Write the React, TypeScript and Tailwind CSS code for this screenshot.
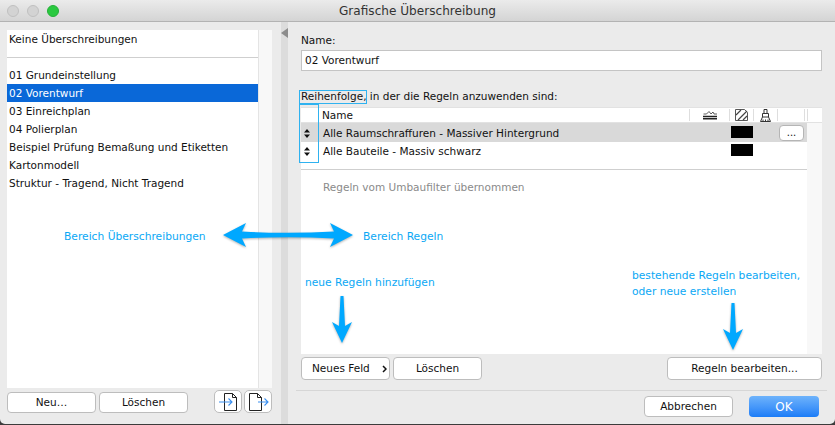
const rows = ["01 Grundeinstellung", "02 Vorentwurf", "03 Einreichplan", "04 Polierplan", "Beispiel Prüfung Bemaßung und Etiketten", "Kartonmodell", "Struktur - Tragend, Nicht Tragend"];

function Btn({ className = "", children }: { className?: string; children: React.ReactNode }) {
  return (
    <button className={"flex items-center justify-center bg-white border border-[#bdbdbd] rounded-[4px] text-[#111] " + className}>
      {children}
    </button>
  );
}

function FileArrow({ flip }: { flip?: boolean }) {
  const x = flip ? 4.5 : 9.5;
  return (
    <svg width="26" height="21" viewBox="0 0 26 21" fill="none">
      <path d={`M${x} 2.500h8l4 4v13h-12z M${x + 8} 2.500v4h4`} stroke="#222" strokeWidth="1" />
      <path d={flip ? "M13 11h10M19.500 7.500l3.500 3.500-3.500 3.500" : "M4 11h13M13.500 7.500l3.500 3.500-3.500 3.500"} stroke="#3a8ff0" strokeWidth="1.100" />
    </svg>
  );
}

function UpDown() {
  return (
    <svg className="ml-[3px] mr-[13px] shrink-0" width="6" height="9" viewBox="0 0 6 9">
      <path d="M3 0l3 3.500H0zM3 9 0 5.500h6z" fill="#111" />
    </svg>
  );
}

function DownArrow({ className }: { className: string }) {
  return (
    <svg className={"absolute drop-shadow-[0_1px_1px_rgba(0,0,0,0.3)] " + className} width="20" height="48" viewBox="0 0 20 48">
      <path d="M8.500 0h3L13 30l7-4-10 21L0 26l7 4z" fill="#00a8ff" />
    </svg>
  );
}

function Sep() {
  return <span className="w-px h-[12px] bg-[#dedede] shrink-0" />;
}

export default function App() {
  return (
    <div className="relative w-[835px] h-[425px] overflow-hidden bg-[#3c3c3c] text-[10.5px] text-[#111]" style={{ fontFamily: '"DejaVu Sans", sans-serif' }}>
      <div className="h-[424px] bg-[#ebebeb] rounded-b-[5px] flex flex-col">
        <div className="relative h-[22px] shrink-0 pt-[1px] bg-gradient-to-b from-[#ebebeb] to-[#d4d4d4] border-b border-[#b3b3b3] flex items-center justify-center text-[12.1px] text-[#333]">
          <div className="absolute left-[7px] top-[5px] flex gap-[8px]">
            <span className="w-[12px] h-[12px] rounded-full bg-[#d3d3d3] border border-[#c0c0c0]" />
            <span className="w-[12px] h-[12px] rounded-full bg-[#d3d3d3] border border-[#c0c0c0]" />
            <span className="w-[12px] h-[12px] rounded-full bg-[#2ac940] border border-[#25b038]" />
          </div>
          Grafische Überschreibung
        </div>

        <div className="flex flex-1 min-h-0">
          {/* left panel */}
          <div className="w-[281px] shrink-0 pl-[7px] pt-[8px] flex flex-col">
            <div className="flex h-[358px] w-[265px]">
              <div className="w-[252px] bg-white border-r border-[#e4e4e4]">
                <div className="h-[18px] pl-[2px] pt-[1px] flex items-center">Keine Überschreibungen</div>
                <div className="h-[10px] border-b border-[#cfcfcf] mb-[8px]" />
                {rows.map((r) => (
                  <div key={r} className={"h-[18px] pl-[2px] pt-[1px] flex items-center " + (r === "02 Vorentwurf" ? "bg-[#0a68d8] text-white" : "")}>
                    {r}
                  </div>
                ))}
              </div>
              <div className="w-[13px] bg-[#f8f8f8]" />
            </div>
            <div className="flex items-start h-[24px] mt-[2px]">
              <Btn className="w-[89px] h-[21px] mt-[2px]">Neu…</Btn>
              <Btn className="w-[89px] h-[21px] mt-[2px] ml-[3px]">Löschen</Btn>
              <Btn className="w-[28px] h-[23px] ml-[26px] rounded-[5px]"><FileArrow /></Btn>
              <Btn className="w-[28px] h-[23px] ml-[2px] rounded-[5px]"><FileArrow flip /></Btn>
            </div>
          </div>

          {/* splitter */}
          <div className="w-[7px] shrink-0 bg-[#dcdcdc] relative">
            <span className="absolute left-0 top-[6px] w-0 h-0 border-y-[5px] border-y-transparent border-r-[7px] border-r-[#8c8c8c]" />
          </div>

          {/* right panel */}
          <div className="flex-1 pl-[13px] pr-[13px] pt-[10px] flex flex-col">
            <div className="h-[16px] pt-[1px] flex items-center">Name:</div>
            <div className="h-[21px] mt-[2px] bg-white border border-[#c4c4c4] flex items-center pl-[3px]">02 Vorentwurf</div>
            <div className="h-[15px] mt-[18px] pt-[1px] flex items-center">Reihenfolge, in der die Regeln anzuwenden sind:</div>

            <div className="mt-[3px] h-[247px] bg-white flex flex-col">
              <div className="h-[16px] shrink-0 border-y border-[#e2e2e2] flex items-center">
                <span className="w-[21px] shrink-0" />
                <span className="flex-1 pt-[1px]">Name</span>
                <Sep />
                <div className="w-[39px] flex justify-center">
                  <svg width="14" height="10" viewBox="0 0 14 10" fill="none">
                    <path d="M0.500 4h3L6 1.500 8 4l2-2 1 2h3" stroke="#333" strokeWidth="0.800" />
                    <path d="M0 6.500h14M0 8.800h14" stroke="#222" strokeWidth="1.400" />
                  </svg>
                </div>
                <Sep />
                <div className="w-[23px] flex justify-center">
                  <svg width="13" height="12" viewBox="0 0 13 12" fill="none">
                    <path d="M0.500 0.500h9l3 3v8h-12z" stroke="#444" strokeWidth="0.900" />
                    <path d="M1 6 6 1M3 11l9-9M8 11l4-4" stroke="#444" strokeWidth="1.200" />
                  </svg>
                </div>
                <Sep />
                <div className="w-[23px] flex justify-center">
                  <svg width="11" height="13" viewBox="0 0 11 13" fill="none">
                    <path d="M4 0.500h3v4H4zM2.500 4.500h6v3.500h-6zM2.500 8 0.500 12.500h10L8.500 8" stroke="#333" />
                    <path d="M3 10.500v2M5.500 10.500v2M8 10.500v2" stroke="#333" />
                  </svg>
                </div>
                <Sep />
                <div className="w-[26px]" />
                <Sep />
                <span className="w-px ml-[1px]" />
                <Sep />
                <span className="w-[14px]" />
              </div>

              <div className="flex flex-1 min-h-0">
                <div className="flex-1 flex flex-col">
                  <div className="h-[19px] pt-[2px] bg-[#d9d9d9] flex items-center relative">
                    <UpDown />
                    Alle Raumschraffuren - Massiver Hintergrund
                    <span className="absolute left-[430px] top-[3px] w-[22px] h-[12px] bg-black" />
                    <span className="absolute left-[478px] top-[2px] w-[25px] h-[16px] bg-white border border-[#b5b5b5] rounded-[4px] text-[10px] leading-[14px] text-center">...</span>
                  </div>
                  <div className="h-[18px] pt-[1px] flex items-center relative">
                    <UpDown />
                    Alle Bauteile - Massiv schwarz
                    <span className="absolute left-[430px] top-[2px] w-[22px] h-[12px] bg-black" />
                  </div>
                  <div className="mt-[9px] border-t border-[#cfcfcf] pt-[10px] pl-[22px] text-[#8a8a8a]">Regeln vom Umbaufilter übernommen</div>
                </div>
                <div className="w-[15px] bg-[#f8f8f8]" />
              </div>
            </div>

            <div className="flex mt-[3px] h-[23px]">
              <Btn className="w-[89px] h-[23px] justify-start pl-[10px]">
                Neues Feld
                <svg className="ml-[12px]" width="5" height="8" viewBox="0 0 5 8" fill="none">
                  <path d="M1 1l3 3-3 3" stroke="#111" strokeWidth="1.500" />
                </svg>
              </Btn>
              <Btn className="w-[89px] h-[23px] ml-[3px]">Löschen</Btn>
              <Btn className="w-[155px] h-[23px] ml-auto">Regeln bearbeiten...</Btn>
            </div>

            <div className="-mx-[5px] mt-[10px] border-t border-[#d6d6d6] flex justify-end pt-[5px] pr-[8px]">
              <Btn className="w-[89px] h-[21px]">Abbrechen</Btn>
              <button className="w-[70px] h-[21px] ml-[16px] rounded-[4px] bg-gradient-to-b from-[#6db3fb] to-[#1a7cf7] text-white text-[12px]">OK</button>
            </div>
          </div>
        </div>
      </div>

      {/* annotations */}
      <div className="absolute left-[299px] top-[90px] w-[68px] h-[14px] border border-[#2fb2f0]" />
      <div className="absolute left-[299px] top-[104px] w-[20px] h-[59px] border border-[#2fb2f0]" />
      <span className="absolute left-[64px] top-[229px] text-[10.7px] text-[#0aa8f5]">Bereich Überschreibungen</span>
      <span className="absolute left-[363px] top-[229px] text-[10.7px] text-[#0aa8f5]">Bereich Regeln</span>
      <span className="absolute left-[305px] top-[275px] text-[10.7px] text-[#0aa8f5]">neue Regeln hinzufügen</span>
      <span className="absolute left-[632px] top-[268px] leading-[16px] text-[10.7px] text-[#0aa8f5]">bestehende Regeln bearbeiten,<br />oder neue erstellen</span>
      <span className="absolute left-[282px] top-[234px] w-[6px] h-[3px] bg-[#555]" />
      <svg className="absolute left-[223px] top-[223px] drop-shadow-[0_1px_1px_rgba(0,0,0,0.3)]" width="130" height="24" viewBox="0 0 130 24">
        <path d="M0 12 23 0l-4 8.500Q65 11 111 8.500L107 0l23 12-23 12 4-8.500Q65 13 19 15.500l4 8.500z" fill="#00a8ff" />
      </svg>
      <DownArrow className="left-[332px] top-[296px]" />
      <DownArrow className="left-[723px] top-[303px]" />
    </div>
  );
}
